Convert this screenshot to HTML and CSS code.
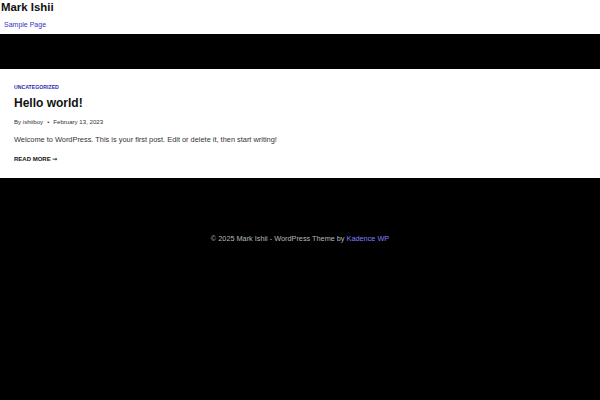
FILE: index.html
```html
<!DOCTYPE html>
<html lang="en">
<head>
<meta charset="utf-8">
<title>Mark Ishii</title>
<link rel="stylesheet" href="styles.css">
</head>
<body>
<header class="site-header">
  <div class="site-title">Mark Ishii</div>
  <nav class="site-nav"><a href="#">Sample Page</a></nav>
</header>
<div class="hero"></div>
<main class="content">
  <article class="post">
    <div class="post-cat"><a href="#">Uncategorized</a></div>
    <h2 class="post-title">Hello world!</h2>
    <div class="post-meta"><span>By ishiiboy</span><span class="dot">•</span><span>February 13, 2023</span></div>
    <p class="post-excerpt">Welcome to WordPress. This is your first post. Edit or delete it, then start writing!</p>
    <a class="read-more" href="#">Read More <span class="arrow">→</span></a>
  </article>
</main>
<footer class="site-footer">
  <p class="footer-text">© 2025 Mark Ishii - WordPress Theme by <a href="#">Kadence WP</a></p>
</footer>
</body>
</html>
```
FILE: styles.css
```css
html, body {
  margin: 0;
  padding: 0;
  height: 100%;
}
body {
  font-family: "Liberation Sans", Arial, sans-serif;
  background: #000;
  color: #222;
  display: flex;
  flex-direction: column;
}
a {
  text-decoration: none;
}
.site-header {
  background: #fff;
  height: 34px;
  box-sizing: border-box;
  padding: 0 0 0 1px;
}
.site-title {
  font-size: 11.4px;
  font-weight: bold;
  line-height: 14px;
  color: #111;
}
.site-nav {
  margin-top: 3px;
  padding-left: 3px;
  line-height: 10px;
}
.site-nav a {
  font-size: 7px;
  color: #3434c8;
}
.hero {
  height: 35px;
  background: #000;
}
.content {
  background: #fff;
}
.post {
  padding: 12px 14px 15px;
}
.post-cat {
  line-height: 6px;
}
.post-cat a {
  font-size: 5.2px;
  font-weight: bold;
  text-transform: uppercase;
  color: #2b2bb0;
}
.post-title {
  margin: 6px 0 0;
  font-size: 12px;
  font-weight: bold;
  line-height: 14px;
  color: #111;
}
.post-meta {
  margin-top: 8px;
  font-size: 6.1px;
  line-height: 8px;
  color: #333;
  display: flex;
  align-items: center;
}
.post-meta .dot {
  margin: 0 4px 0 4px;
}
.post-excerpt {
  margin: 9px 0 0;
  font-size: 7.4px;
  line-height: 10px;
  color: #333;
}
.read-more {
  display: block;
  margin-top: 10px;
  font-size: 6px;
  line-height: 8px;
  font-weight: bold;
  text-transform: uppercase;
  color: #111;
}
.read-more .arrow {
  font-weight: bold;
  font-family: "DejaVu Sans", sans-serif;
}
.site-footer {
  flex: 1;
  background: #000;
  padding-top: 56px;
}
.footer-text {
  margin: 0;
  text-align: center;
  font-size: 7.3px;
  line-height: 10px;
  color: #b8b8b8;
}
.footer-text a {
  color: #8080ff;
}
```
